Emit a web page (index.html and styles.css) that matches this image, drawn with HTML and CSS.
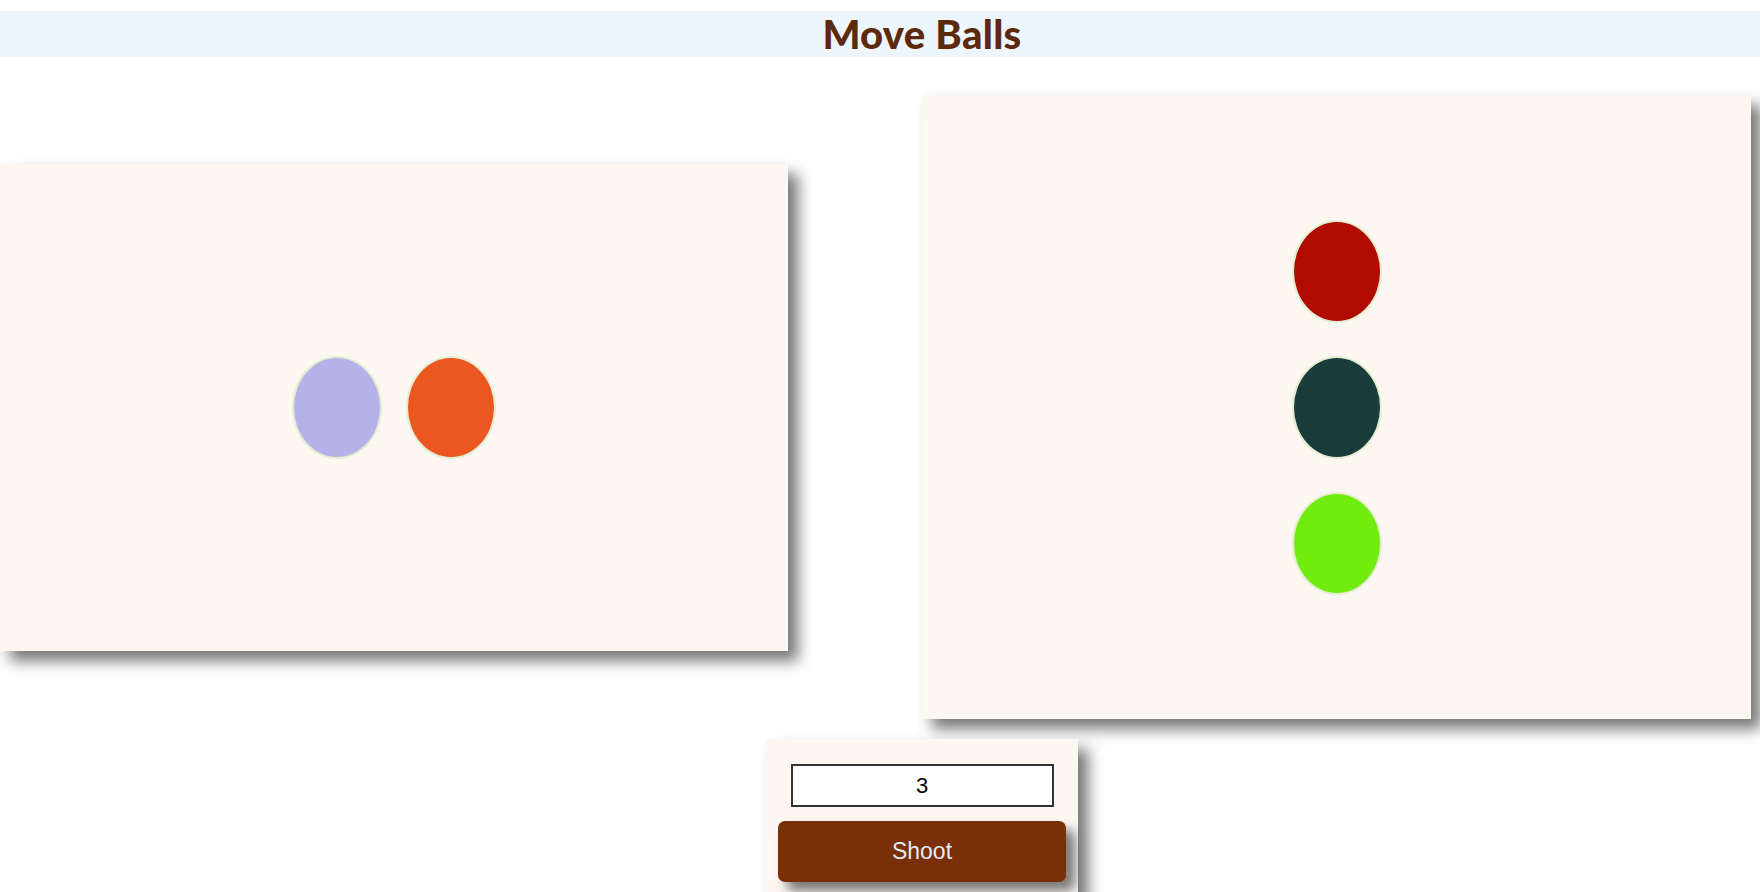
FILE: index.html
```html
<!DOCTYPE html>
<html>
<head>
<meta charset="utf-8">
<title>Move Balls</title>
<link rel="stylesheet" href="styles.css">
</head>
<body>
<div class="page">
  <header class="header"><h1 class="title">Move Balls</h1></header>
  <div class="boards">
    <div class="board board-left">
      <div class="balls balls-row">
        <div class="ball lavender"></div>
        <div class="ball orange"></div>
      </div>
    </div>
    <div class="board board-right">
      <div class="balls balls-col">
        <div class="ball red"></div>
        <div class="ball teal"></div>
        <div class="ball lime"></div>
      </div>
    </div>
  </div>
  <div class="controls">
    <input class="count" type="text" value="3">
    <button class="shoot">Shoot</button>
  </div>
</div>
</body>
</html>
```

FILE: styles.css
```css
html, body {
  margin: 0;
  padding: 0;
  overflow: hidden;
  background: #ffffff;
}
.page {
  width: 1844px;
  display: flex;
  flex-direction: column;
}
.header {
  margin-top: 11px;
  height: 46px;
  background: #eef6fd;
  display: flex;
  align-items: center;
  justify-content: center;
}
.title {
  margin: 0;
  font-family: Lato, "Open Sans", sans-serif;
  font-weight: 900;
  font-size: 40px;
  letter-spacing: 0.3px;
  line-height: 46px;
  color: #5c2a0b;
}
.boards {
  margin-top: 38px;
  display: flex;
  align-items: center;
  gap: 134px;
}
.board {
  background: #fcf7f1;
  display: flex;
  align-items: center;
  justify-content: center;
  box-shadow: 10px 10px 14px #777777;
}
.board-left {
  width: 788px;
  height: 487px;
}
.board-right {
  width: 829px;
  height: 624px;
}
.balls {
  display: flex;
}
.balls-row {
  flex-direction: row;
  gap: 24px;
}
.balls-col {
  flex-direction: column;
  gap: 33px;
}
.ball {
  box-sizing: border-box;
  width: 90px;
  height: 103px;
  border-radius: 50%;
  border: 2px solid #e4edd2;
}
.lavender { background: #b4b2e8; }
.orange { background: #ec5620; }
.red { background: #b10b00; }
.teal { background: #1a3d3c; }
.lime { background: #72ec0f; }
.controls {
  align-self: center;
  margin-top: 20px;
  width: 312px;
  box-sizing: border-box;
  padding: 25px 12px 20px;
  background: #fcf7f1;
  box-shadow: 10px 10px 14px #777777;
  display: flex;
  flex-direction: column;
  align-items: center;
}
.count {
  box-sizing: border-box;
  width: 263px;
  height: 43px;
  border: 2px solid #333333;
  background: #ffffff;
  text-align: center;
  font-family: "Liberation Sans", Arial, sans-serif;
  font-size: 22px;
  color: #000;
  padding: 0;
  outline: none;
}
.shoot {
  margin-top: 14px;
  width: 288px;
  height: 61px;
  border: none;
  border-radius: 7px;
  background: #7a2f06;
  color: #e2ebf9;
  font-family: "Liberation Sans", Arial, sans-serif;
  font-size: 23px;
  box-shadow: 9px 9px 12px #777777;
}
```
